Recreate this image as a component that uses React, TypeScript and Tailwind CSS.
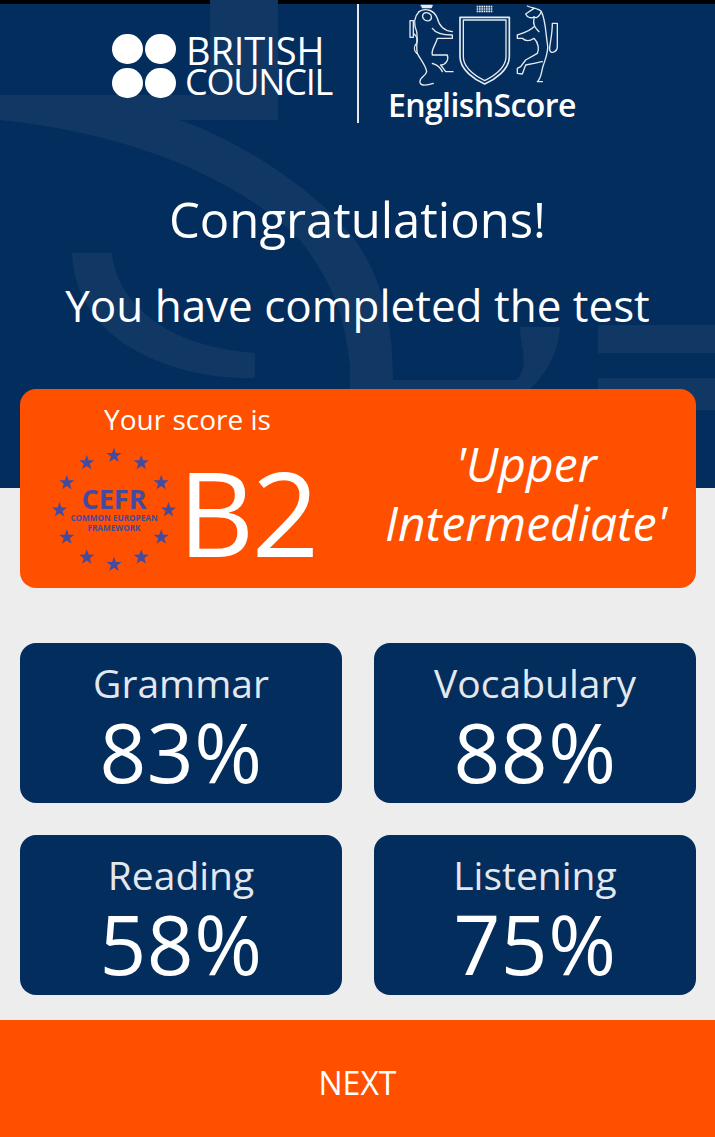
const font = { fontFamily: '"Open Sans", "Noto Sans", sans-serif' };

const stars = Array.from({ length: 12 }, (_, i) => {
  const a = (i * Math.PI) / 6;
  return { x: 62 + 54.500 * Math.sin(a), y: 62 - 54.500 * Math.cos(a) };
});

const starPath = (cx: number, cy: number, r: number) => {
  const pts: string[] = [];
  for (let i = 0; i < 10; i++) {
    const rad = i % 2 === 0 ? r : r * 0.4;
    const a = (i * Math.PI) / 5;
    pts.push(`${cx + rad * Math.sin(a)},${cy - rad * Math.cos(a)}`);
  }
  return pts.join(" ");
};

const CefrLogo = () => (
  <svg width="124" height="124" viewBox="0 0 124 124" className="shrink-0">
    {stars.map((s, i) => (
      <polygon key={i} points={starPath(s.x, s.y, 8)} fill="#444a9e" />
    ))}
    <text x="62" y="61" textAnchor="middle" fontSize="27" fontWeight="700" fill="#444a9e" fontFamily="Open Sans, sans-serif">
      CEFR
    </text>
    <text x="62" y="73" textAnchor="middle" fontSize="8.200" fontWeight="700" fill="#444a9e" fontFamily="Open Sans, sans-serif">
      COMMON EUROPEAN
    </text>
    <text x="62" y="83" textAnchor="middle" fontSize="8.200" fontWeight="700" fill="#444a9e" fontFamily="Open Sans, sans-serif">
      FRAMEWORK
    </text>
  </svg>
);

// drawn in 3x units, left edge sits at x=405 of the page
const Crest = () => (
  <svg width="160" height="91" viewBox="0 12 480 273" fill="none" stroke="#e6ebf1" strokeWidth="4" strokeLinejoin="round" strokeLinecap="round" className="shrink-0">
    {/* lion */}
    <path d="M52 17H84M55 22H82" strokeWidth="5" />
    <path d="M45 35C30 50 28 70 38 95C42 115 35 140 40 160C50 180 65 195 68 215C65 230 45 232 48 248C52 258 70 256 88 250" />
    <path d="M18 62h10v50h-10zM28 100C40 110 42 120 38 130C30 138 28 150 38 160" />
    <path d="M60 40C50 50 60 65 75 62C85 58 85 45 75 40C70 37 62 37 60 40z" />
    <path d="M45 35C65 22 90 30 100 55C105 75 115 92 145 95M85 85C95 100 115 105 145 105v10H100C95 135 80 150 85 165H130C135 180 125 195 110 195L125 215h22M85 190C95 195 105 195 115 215" />
    {/* shield */}
    <path d="M168 52H316V170C316 210 270 240 242 252C214 240 168 210 168 170z" strokeWidth="5" />
    <path d="M178 60H306V170C306 205 265 230 242 242C219 230 178 205 178 170z" />
    <path d="M218 20h48M218 27h48M218 34h48" strokeWidth="5" strokeDasharray="5 2" strokeLinecap="butt" />
    {/* bull */}
    <g transform="translate(240 0)">
      <path d="M130 18C145 25 165 25 172 35M125 42L150 25M125 42C130 55 145 55 150 50C160 60 170 40 172 35" />
      <path d="M172 35C185 60 185 100 190 130C195 150 185 175 180 190C170 215 175 230 160 245h15" />
      <path d="M205 70h15v70C220 155 205 160 200 155C190 150 205 120 205 70z" />
      <path d="M150 80C135 95 115 100 100 105v10h15C125 125 135 125 150 115C165 130 165 150 160 160L125 180L110 200L100 205v15L115 222L125 195L150 190C160 188 170 185 175 185" />
      <path d="M150 55C145 75 155 85 165 95" />
    </g>
  </svg>
);

const BcLogo = () => (
  <div className="flex items-center gap-[9px] text-white">
    <div className="grid grid-cols-2 gap-x-[2px] gap-y-[4px]">
      <div className="w-[31px] h-[30px] rounded-full bg-white" />
      <div className="w-[31px] h-[30px] rounded-full bg-white" />
      <div className="w-[31px] h-[30px] rounded-full bg-white" />
      <div className="w-[31px] h-[30px] rounded-full bg-white" />
    </div>
    <div className="font-medium">
      <div className="ml-[1px] text-[38px] leading-[32px] tracking-[-0.100px]">BRITISH</div>
      <div className="text-[36px] leading-[32px] tracking-[-1.200px]">COUNCIL</div>
    </div>
  </div>
);

const Pattern = () => (
  <svg className="absolute inset-x-0 -top-[4px]" width="715" height="488" viewBox="0 0 715 488" fill="#113864">
    <path d="M0 95H210V0H278V120H0z" />
    <path d="M180 120C250 145 320 195 355 240C380 275 393 320 393 380H517C530 365 520 345 520 327H560C558 360 540 385 505 410H393V488H350V367C345 320 335 285 300 240C250 190 150 135 0 120z" />
    <path d="M72 253H112C115 290 150 345 255 353V378C170 380 75 340 72 253z" />
    <path d="M598 325H715V353H598zM598 378H715V410H598z" />
  </svg>
);

const ScoreCard = ({ label, value }: { label: string; value: string }) => (
  <div className="h-[160px] rounded-[16px] bg-[#032d5c] flex flex-col items-center text-white">
    <div className="text-[39px] leading-[46px] mt-[17px] text-[#e4e8ee]">{label}</div>
    <div className="text-[82px] leading-[90px] tracking-[0.500px]">{value}</div>
  </div>
);

export default function App() {
  return (
    <div className="w-[715px] h-[1137px] bg-[#ededed] flex flex-col overflow-hidden" style={font}>
      <header className="relative h-[488px] shrink-0 bg-[#032d5c] border-t-4 border-black text-white">
        <Pattern />
        <div className="relative flex flex-col items-center">
          <div className="flex h-[119px] items-start self-start ml-[112px]">
            <div className="mt-[30px] w-[221px]">
              <BcLogo />
            </div>
            <div className="w-[2px] h-[119px] bg-white/90 ml-[24px] mr-[31px]" />
            <div className="flex flex-col items-start">
              <div className="ml-[14px]">
                <Crest />
              </div>
              <div className="text-[32px] leading-[36px] font-semibold tracking-[-0.600px] -mt-[8px] -ml-[2px]">EnglishScore</div>
            </div>
          </div>
          <h1 className="mt-[62px] text-[49px] leading-[68px]">Congratulations!</h1>
          <p className="mt-[22px] text-[44px] leading-[60px]">You have completed the test</p>
        </div>
      </header>

      <section className="relative -mt-[99px] ml-[20px] w-[676px] h-[199px] rounded-[16px] bg-[#ff5000] text-white flex shrink-0">
        <div className="flex flex-col w-[330px] pl-[32px]">
          <div className="text-[28px] leading-[38px] ml-[52px] mt-[11px]">Your score is</div>
          <div className="flex items-center mt-[8px]">
            <CefrLogo />
            <div className="text-[118px] leading-[124px] ml-[2px] mt-[4px] tracking-[-2.500px]">B2</div>
          </div>
        </div>
        <div className="flex-1 text-center italic text-[48px] leading-[59px] pt-[45px] pl-[6px]">
          'Upper
          <br />
          Intermediate'
        </div>
      </section>

      <main className="grid grid-cols-2 gap-[32px] ml-[20px] w-[676px] mt-[55px]">
        <ScoreCard label="Grammar" value="83%" />
        <ScoreCard label="Vocabulary" value="88%" />
        <ScoreCard label="Reading" value="58%" />
        <ScoreCard label="Listening" value="75%" />
      </main>

      <button className="mt-[25px] h-[118px] w-full bg-[#ff5000] text-white text-[32px] pt-[8px] flex items-center justify-center">
        NEXT
      </button>
    </div>
  );
}
